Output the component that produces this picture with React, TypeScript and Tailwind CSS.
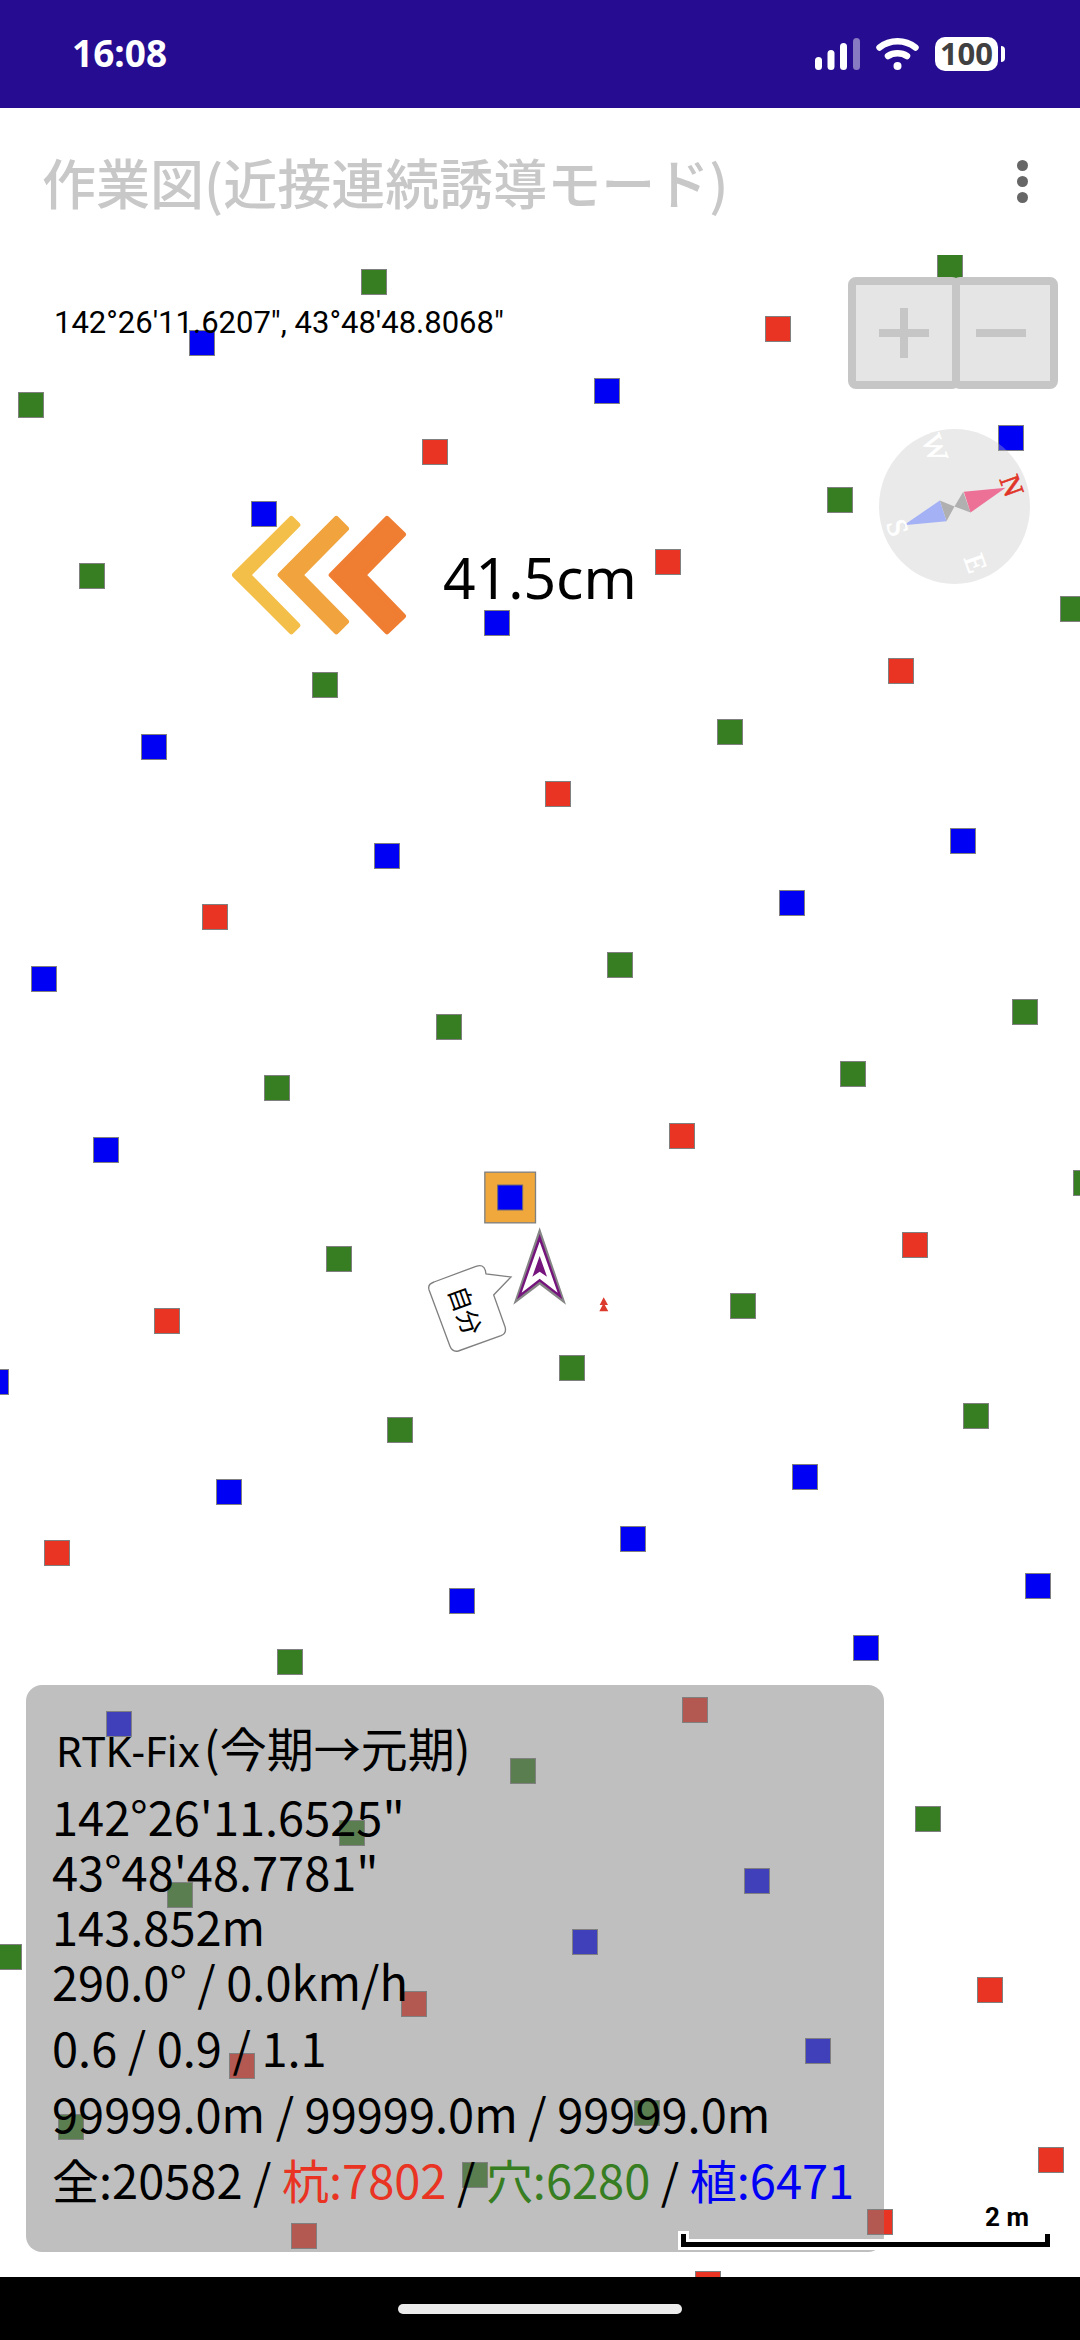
type Marker = "r" | "g" | "b";

const markerColor: Record<Marker, string> = {
  r: "bg-[#e93323]",
  g: "bg-[#377d22]",
  b: "bg-[#0000f5]",
};

/* Planting grid: every row has its first column index and the marker kinds that follow. */
const rows: [number, number, string][] = [
  [0, 0, "gbgg"],
  [1, 0, "gbrbrg"],
  [2, 0, "bgbrgb"],
  [3, -1, "brbrgrg"],
  [4, -1, "bgggbb"],
  [5, -2, "brgbrgg"],
  [6, -2, "rbgggrg"],
  [7, -2, "bgbbbg"],
  [8, -3, "ggggrbb"],
  [9, -3, "grrbbg"],
  [10, -2, "rggbr"],
  [11, 0, "rrr"],
];

const markers = rows.flatMap(([i, start, kinds]) =>
  kinds.split("").map((k, n) => {
    const j = start + n;
    return {
      kind: k as Marker,
      x: Math.round(30.6 + 61.6 * i + 171.5 * j),
      y: Math.round(150 + 170.8 * i - 61.7 * j),
    };
  }),
);

function StatusBar() {
  return (
    <div className="flex h-[108px] shrink-0 items-center justify-between bg-[#260c90] pl-[72px] pr-[75px] text-white">
      <time className="pb-1 font-['Noto_Sans',sans-serif] text-[37px] leading-none font-bold">16:08</time>
      <div className="flex items-center">
        <svg className="h-8 w-[45px]" viewBox="0 0 45 32" fill="#fff" aria-label="signal">
          <rect x="0" y="19" width="7" height="13" rx="3.5" />
          <rect x="12.500" y="12" width="7" height="20" rx="3.5" />
          <rect x="25" y="5" width="7" height="27" rx="3.5" />
          <rect x="38" y="0" width="7" height="32" rx="3.5" opacity="0.45" />
        </svg>
        <svg className="ml-4 h-8 w-[43px]" viewBox="0 0 43 32" fill="none" stroke="#fff" strokeWidth="6.500" strokeLinecap="round" aria-label="wifi">
          <path d="M3.500 9.500C14 1.200 29 1.200 39.500 9.500" />
          <path d="M12 18C17.500 14.300 25.500 14.300 31 18" />
          <circle cx="21.500" cy="28" r="4" fill="#fff" stroke="none" />
        </svg>
        <div className="ml-4 flex h-[34px] w-[63px] items-center justify-center rounded-[10px] bg-white pb-[2px] font-['Noto_Sans',sans-serif] text-[31px] leading-none font-bold text-[#404040]">
          100
        </div>
        <div className="ml-[3px] h-4 w-1 rounded-r-sm bg-white" />
      </div>
    </div>
  );
}

function Header() {
  return (
    <header className="flex h-[147px] shrink-0 items-center justify-between bg-white px-[42px]">
      <h1 className="font-['Noto_Sans_CJK_JP',sans-serif] text-[54px] leading-none font-medium whitespace-nowrap text-[#c8c8c8]">
        作業図(近接連続誘導モード)
      </h1>
      <button type="button" aria-label="メニュー" className="flex w-8 flex-col items-center gap-[5px]">
        <span className="size-[11px] rounded-full bg-[#666]" />
        <span className="size-[11px] rounded-full bg-[#666]" />
        <span className="size-[11px] rounded-full bg-[#666]" />
      </button>
    </header>
  );
}

function Guide() {
  return (
    <div className="absolute top-[260px] left-[232px] flex items-center gap-9">
      <svg className="h-[120px] w-[175px]" viewBox="0 0 525 360" strokeWidth="16" strokeLinejoin="round" aria-label="左">
        <path d="M8 180L178 11L197 30L49 180L197 331L178 350Z" fill="#f4bf49" stroke="#f4bf49" />
        <path d="M145 180L313 11L343 41L206 180L343 320L313 350Z" fill="#f1a33e" stroke="#f1a33e" />
        <path d="M298 180L465 11L514 58L395 180L514 303L465 350Z" fill="#ef7d32" stroke="#ef7d32" />
      </svg>
      <p className="pt-1 font-['Noto_Sans',sans-serif] text-[57px] leading-none text-black">41.5cm</p>
    </div>
  );
}

function ZoomButtons() {
  return (
    <div className="absolute top-[22px] right-[22px] flex">
      <button type="button" aria-label="拡大" className="flex h-28 w-28 items-center justify-center rounded-lg border-8 border-[#c6c6c6] bg-[#e5e5e5]">
        <svg className="size-[50px]" viewBox="0 0 50 50" stroke="#c6c6c6" strokeWidth="8">
          <path d="M0 25H50M25 0V50" />
        </svg>
      </button>
      <button type="button" aria-label="縮小" className="-ml-2 flex h-28 w-[106px] items-center justify-center rounded-lg border-8 border-[#c6c6c6] bg-[#e5e5e5] pr-2">
        <svg className="size-[50px]" viewBox="0 0 50 50" stroke="#c6c6c6" strokeWidth="8">
          <path d="M0 25H50" />
        </svg>
      </button>
    </div>
  );
}

function Compass() {
  return (
    <svg
      className="absolute top-[174px] right-[50px] h-[155px] w-[151px] font-['Liberation_Serif',serif]"
      viewBox="0 0 452 464"
      aria-label="コンパス"
    >
      <ellipse cx="226" cy="232" rx="226" ry="232" fill="#c0c0c0" fillOpacity="0.33" />
      <path d="M226 232L252 188L274 250ZM226 232L182 214L202 276Z" fill="#b0b0b0" />
      <path d="M254 188L379 176L274 250Z" fill="#ed7097" />
      <path d="M182 214L74 288L202 276Z" fill="#a4b2f5" />
      <g fontSize="86" textAnchor="middle" fill="#fff" stroke="#fff" strokeWidth="2">
        <text transform="translate(397 170) rotate(70)" y="28" fill="#e03528" stroke="#e03528">N</text>
        <text transform="translate(167 57) rotate(70)" y="28">W</text>
        <text transform="translate(55 296) rotate(70)" y="28">S</text>
        <text transform="translate(288 402) rotate(70)" y="28">E</text>
      </g>
    </svg>
  );
}

function Position() {
  return (
    <svg className="absolute top-[885px] left-[400px] size-60" viewBox="0 0 720 720">
      <rect x="254.500" y="96.500" width="152" height="152" fill="#f0a83c" stroke="#808080" strokeWidth="4" />
      <rect x="293" y="135" width="75" height="75" fill="#0000f5" stroke="#6f6a72" strokeWidth="3" />
      <path d="M419 262L498 494L419 434L340 494Z" fill="#858585" />
      <path d="M419 282L487 478L419 425L351 478Z" fill="#75147c" />
      <path d="M419 305L473 458L419 416L365 458Z" fill="#fff" />
      <path d="M419 348L441 410L419 395L397 410Z" fill="#75147c" />
      <path
        d="M102 426L228 379Q250 371 256 391L258 402L333 411L281 465L315 560Q321 580 303 587L175 633Q157 637 150 619L87 449Q82 433 102 426Z"
        fill="#fff"
        stroke="#808080"
        strokeWidth="4"
      />
      <text
        transform="translate(193 512) rotate(70)"
        y="26"
        textAnchor="middle"
        fontSize="75"
        className="font-['Noto_Sans_CJK_JP',sans-serif]"
      >
        自分
      </text>
      <path d="M611 472L624 495H599ZM611 489L625 514H598Z" fill="#dd3a2e" />
    </svg>
  );
}

function InfoPanel() {
  return (
    <section className="absolute bottom-[25px] left-[26px] rounded-2xl bg-[#808080]/50 pt-[29px] pr-[30px] pb-10 pl-[26px] font-['Noto_Sans_CJK_JP',sans-serif] text-[47px] whitespace-nowrap text-black">
      <p className="mb-2 leading-[66px]">
        <span className="mr-1 ml-1 font-['Noto_Sans',sans-serif] text-[42px] leading-none">RTK-Fix</span>
        (今期→元期)
      </p>
      <p className="leading-[55px]">142°26'11.6525"</p>
      <p className="leading-[55px]">43°48'48.7781"</p>
      <p className="leading-[55px]">143.852m</p>
      <p className="mb-[6px] leading-[55px]">290.0° / 0.0km/h</p>
      <p className="leading-[66px]">0.6 / 0.9 / 1.1</p>
      <p className="leading-[66px]">99999.0m / 99999.0m / 99999.0m</p>
      <p className="leading-[66px]">
        全:20582 / <span className="text-[#e93323]">杭:7802</span> / <span className="text-[#377d22]">穴:6280</span> /{" "}
        <span className="text-[#0000f5]">植:6471</span>
      </p>
    </section>
  );
}

function ScaleBar() {
  return (
    <div className="absolute right-[27px] bottom-[27px] flex w-[375px] flex-col">
      <p className="pr-6 text-right font-[Roboto,sans-serif] text-[26px] leading-7 font-bold text-black">2 m</p>
      <svg className="h-[19px] w-full" viewBox="0 0 375 19" fill="none">
        <path d="M5.500 0V13.500H369.500V0" stroke="#fff" strokeWidth="11" />
        <path d="M5.500 3V13.500H369.500V3" stroke="#000" strokeWidth="5" />
      </svg>
    </div>
  );
}

export default function App() {
  return (
    <div className="flex min-h-screen w-full flex-col bg-white">
      <StatusBar />
      <Header />
      <main className="relative flex-1 overflow-hidden">
        {markers.map((m) => (
          <span
            key={`${m.x}-${m.y}`}
            className={`absolute size-[26px] -translate-1/2 border border-[#808080] ${markerColor[m.kind]}`}
            style={{ left: m.x, top: m.y }}
          />
        ))}
        <p className="absolute top-[50px] left-[54px] font-[Roboto,sans-serif] text-[31px] leading-9 text-black">
          142°26'11.6207", 43°48'48.8068"
        </p>
        <Guide />
        <ZoomButtons />
        <Compass />
        <Position />
        <InfoPanel />
        <ScaleBar />
      </main>
      <footer className="flex h-[63px] shrink-0 items-center justify-center bg-black">
        <div className="h-[10px] w-[284px] rounded-full bg-[#ebebeb]" />
      </footer>
    </div>
  );
}
